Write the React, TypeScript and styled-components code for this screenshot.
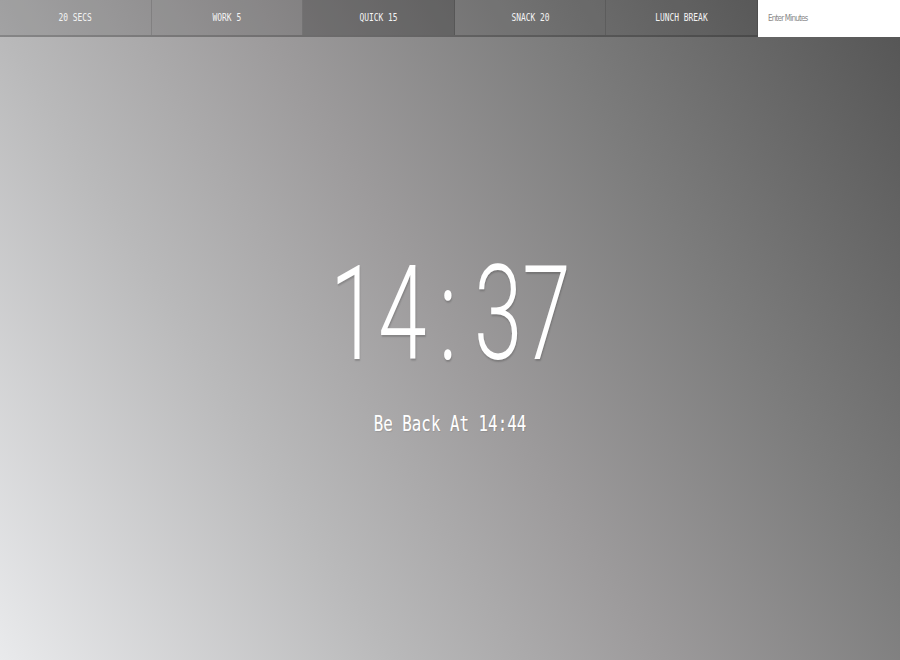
import React from 'react';
import styled, { createGlobalStyle } from 'styled-components';

const GlobalStyle = createGlobalStyle`
  html, body {
    margin: 0;
    padding: 0;
    height: 100%;
  }
  #root {
    height: 100%;
  }
`;

const Page = styled.div`
  width: 900px;
  height: 660px;
  overflow: hidden;
  display: flex;
  flex-direction: column;
  background: linear-gradient(58deg, #e9eaec 0%, #b9b9ba 30%, #9d9b9c 50%, #7c7c7c 72%, #545454 100%);
  font-family: "DejaVu Sans Mono", monospace;
`;

const Nav = styled.nav`
  display: grid;
  grid-template-columns: repeat(5, 151.6px) 1fr;
  height: 35px;
  border-bottom: 2px solid rgba(0, 0, 0, 0.28);
`;

const NavButton = styled.button<{ $shade: number }>`
  border: none;
  border-right: 1px solid rgba(0, 0, 0, 0.12);
  background: rgba(0, 0, 0, ${(p) => p.$shade});
  color: #f4f4f4;
  font-family: "DejaVu Sans Mono", monospace;
  font-size: 11px;
  padding: 0;
  cursor: pointer;
  display: flex;
  align-items: center;
  justify-content: center;
`;

const Narrow = styled.span`
  display: inline-block;
  transform: scaleX(0.72);
  white-space: nowrap;
`;

const MinutesInput = styled.input`
  border: none;
  outline: none;
  background: #ffffff;
  height: 37px;
  margin-bottom: -2px;
  padding: 0 0 0 10px;
  font-family: "DejaVu Sans Condensed", "DejaVu Sans", sans-serif;
  font-size: 8px;
  letter-spacing: -0.8px;
  color: #333;
  &::placeholder {
    color: #888;
  }
`;

const Stage = styled.main`
  flex: 1;
  display: flex;
  flex-direction: column;
  align-items: center;
  padding-top: 212px;
`;

const Clock = styled.div`
  color: #ffffff;
  font-family: Roboto, "DejaVu Sans", sans-serif;
  font-weight: 300;
  font-size: 132px;
  line-height: 130px;
  text-shadow: 1px 2px 2px rgba(0, 0, 0, 0.18);
  display: flex;
  align-items: center;
`;

/* glyphs are squeezed with scaleX; the negative margins take back the
   width the transform leaves behind in layout */
const ClockDigits = styled.span`
  display: inline-block;
  transform: scaleX(0.66);
  margin: 0 -25px;
  white-space: nowrap;
`;

const ClockColon = styled.span`
  display: inline-block;
  transform: scaleX(0.66);
  margin: 0 12px 0 8px;
`;

const BackAt = styled.div`
  margin-top: 32px;
  color: #ffffff;
  font-family: "DejaVu Sans Mono", monospace;
  font-size: 22px;
  text-shadow: 1px 1px 1px rgba(0, 0, 0, 0.1);
`;

const presets = [
  { label: '20 SECS', shade: 0.12 },
  { label: 'WORK 5', shade: 0.12 },
  { label: 'QUICK 15', shade: 0.26 },
  { label: 'SNACK 20', shade: 0.1 },
  { label: 'LUNCH BREAK', shade: 0.1 },
];

const hours = '14';
const minutes = '37';

const App = () => {
  return (
    <Page>
      <GlobalStyle />
      <Nav>
        {presets.map((p) => (
          <NavButton key={p.label} $shade={p.shade}>
            <Narrow>{p.label}</Narrow>
          </NavButton>
        ))}
        <MinutesInput placeholder="Enter Minutes" />
      </Nav>
      <Stage>
        <Clock>
          <ClockDigits>{hours}</ClockDigits>
          <ClockColon>:</ClockColon>
          <ClockDigits>{minutes}</ClockDigits>
        </Clock>
        <BackAt>
          <Narrow>Be Back At 14:44</Narrow>
        </BackAt>
      </Stage>
    </Page>
  );
};

export default App;
